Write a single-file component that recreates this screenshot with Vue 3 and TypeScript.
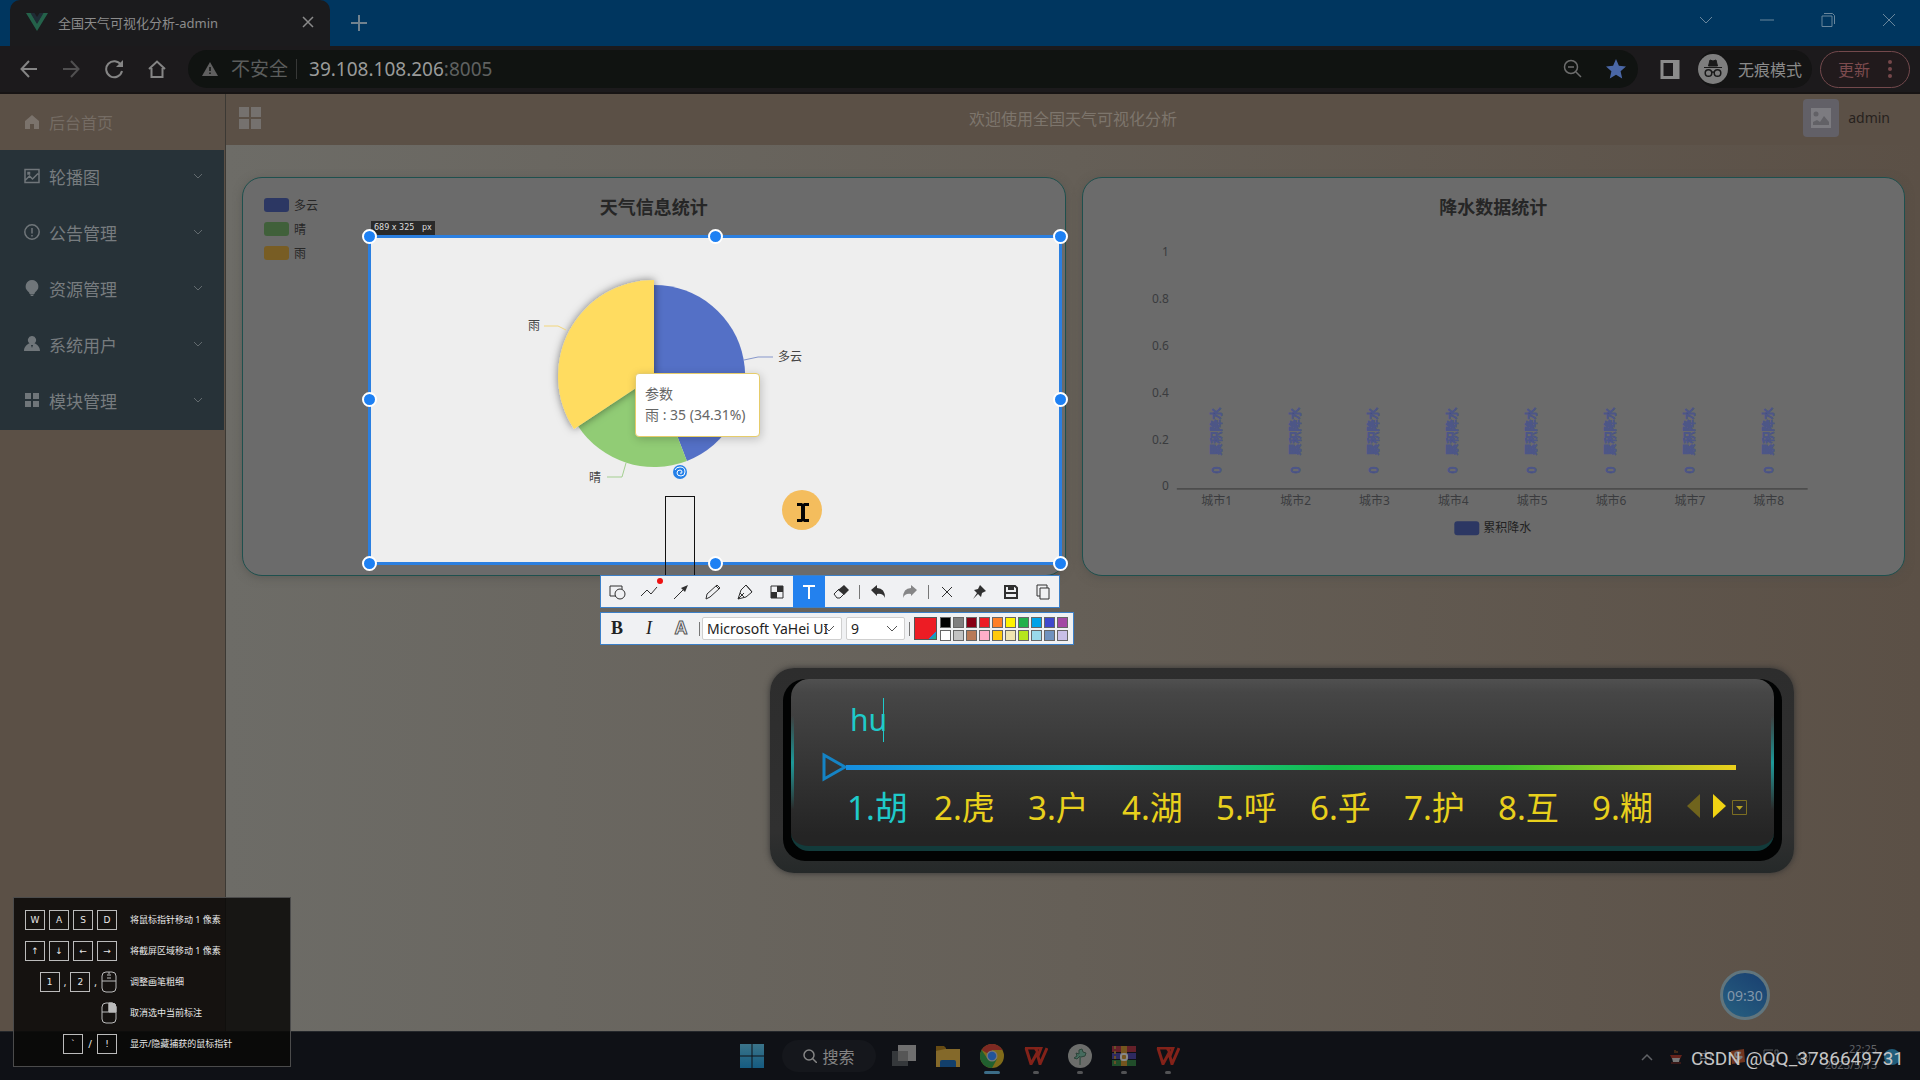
<script setup lang="ts">
interface MenuItem { label: string; icon: string }

const menu: MenuItem[] = [
  { label: '轮播图', icon: 'M1 1.5h14v13H1zM1.5 12l4-4 3 3 5.500-5.500M4 4.500h1.500v1.500H4z' },
  { label: '公告管理', icon: 'M8 .8a7.200 7.200 0 1 0 0 14.400A7.200 7.200 0 1 0 8 .8zM8 4v5.500M8 11v1.500' },
  { label: '资源管理', icon: 'bulb' },
  { label: '系统用户', icon: 'user' },
  { label: '模块管理', icon: 'grid' },
]

const solidIcons: Record<string, string> = {
  bulb: 'M8 0a6.500 6.500 0 0 0-4 11.500c1 .8 1.500 1.500 1.500 2.500h5c0-1 .5-1.700 1.500-2.500A6.500 6.500 0 0 0 8 0zM6 14.500h4L9 16H7z',
  user: 'M8 0a4 4 0 0 1 2.500 7.200C13.500 8.500 16 11 16 15H0c0-4 2.500-6.500 5.500-7.800A4 4 0 0 1 8 0zM7 9l1 3 1-3z',
  grid: 'M1 1h6v6H1zM9 1h6v6H9zM1 9h6v6H1zM9 9h6v6H9z',
}

const weather = [
  { name: '多云', color: '#2c3763' },
  { name: '晴', color: '#40603a' },
  { name: '雨', color: '#785d24' },
]

const ticks = ['1', '0.8', '0.6', '0.4', '0.2', '0']
const cities = [1, 2, 3, 4, 5, 6, 7, 8].map((n) => `城市${n}`)
const categoryX = (i: number): number => 134 + i * 79

const candidates = ['胡', '虎', '户', '湖', '呼', '乎', '护', '互', '糊']

const palette = [
  '#000000', '#7f7f7f', '#880015', '#ed1c24', '#ff7f27', '#fff200', '#22b14c', '#00a2e8', '#3f48cc', '#a349a4',
  '#ffffff', '#c3c3c3', '#b97a57', '#ffaec9', '#ffc90e', '#efe4b0', '#b5e61d', '#99d9ea', '#7092be', '#c8bfe7',
]

const handles = ['nw', 'n', 'ne', 'w', 'e', 'sw', 's', 'se']
</script>

<template>
  <div class="desktop">
    <header class="tabs">
      <div class="tab">
        <svg width="22" height="18" viewBox="0 0 22 18"><path d="M0 0h5l6 10 6-10h5L11 18z" fill="#24624a" /><path d="M4.500 0h4L11 4l2.500-4h4L11 11z" fill="#1f2c35" /></svg>
        <span class="tab-title">全国天气可视化分析-admin</span>
        <button class="plain" aria-label="关闭标签页"><svg width="12" height="12" viewBox="0 0 12 12"><path d="M1 1l10 10M11 1L1 11" stroke="#8a8a8a" stroke-width="1.500" /></svg></button>
      </div>
      <button class="plain plus" aria-label="新建标签页"><svg width="16" height="16" viewBox="0 0 16 16"><path d="M8 0v16M0 8h16" stroke="#71828e" stroke-width="2" /></svg></button>
      <div class="window-buttons">
        <button class="plain" aria-label="搜索标签页"><svg width="14" height="14" viewBox="0 0 14 14"><path d="M1 4l6 6 6-6" /></svg></button>
        <button class="plain" aria-label="最小化"><svg width="14" height="14" viewBox="0 0 14 14"><path d="M0 7h14" /></svg></button>
        <button class="plain" aria-label="还原"><svg width="14" height="14" viewBox="0 0 14 14"><path d="M1 3h10v10.500H1zM3 .5h8.500l2 2V11" /></svg></button>
        <button class="plain" aria-label="关闭"><svg width="14" height="14" viewBox="0 0 14 14"><path d="M1 1l12 12M13 1L1 13" /></svg></button>
      </div>
    </header>

    <nav class="toolbar">
      <button class="plain" aria-label="后退"><svg width="18" height="18" viewBox="0 0 18 18" class="line"><path d="M17 9H2M9 1L1.500 9 9 17" /></svg></button>
      <button class="plain faint" aria-label="前进"><svg width="18" height="18" viewBox="0 0 18 18" class="line"><path d="M1 9h15M9 1l7.500 8L9 17" /></svg></button>
      <button class="plain" aria-label="刷新"><svg width="20" height="20" viewBox="0 0 20 20" class="line"><path d="M17 6A8 8 0 1 0 18 12" /><path d="M19 1v7h-7z" fill="#858585" stroke="none" /></svg></button>
      <button class="plain" aria-label="主页"><svg width="18" height="18" viewBox="0 0 18 18" class="line"><path d="M1 9l8-7.500L17 9M3.500 8v9h11V8" /></svg></button>
      <div class="omnibox">
        <svg width="16" height="14" viewBox="0 0 16 14"><path d="M8 0l8 14H0z" fill="#606060" /><path d="M8 5v4M8 10.500v1.500" stroke="#101311" stroke-width="1.500" /></svg>
        <span class="unsafe">不安全</span>
        <span class="address"><b>39.108.108.206</b>:8005</span>
        <svg class="push" width="20" height="20" viewBox="0 0 20 20" fill="none" stroke="#6d6d6d" stroke-width="1.500"><circle cx="8" cy="8" r="6.500" /><path d="M5 8h6M13 13l5 5" /></svg>
        <svg width="20" height="20" viewBox="0 0 20 20"><path d="M10 0l2.900 6.800 7.100.7-5.400 4.800 1.600 7.200-6.200-3.700-6.200 3.700 1.600-7.200L0 7.500l7.100-.7z" fill="#4a67a6" /></svg>
      </div>
      <svg width="20" height="19" viewBox="0 0 20 19"><path d="M2 1.500h16v16H2z" fill="none" stroke="#8b8b8b" stroke-width="3" /><path d="M13 2h5v15h-5z" fill="#8b8b8b" /></svg>
      <div class="private">
        <svg width="30" height="30" viewBox="0 0 30 30"><circle cx="15" cy="15" r="15" fill="#7e7e7e" /><path d="M10.500 12L12 6l3 1 3-1 1.500 6zM6 13.500h18" fill="#191919" stroke="#191919" /><g fill="none" stroke="#191919" stroke-width="1.500"><circle cx="10.500" cy="19" r="3.300" /><circle cx="19.500" cy="19" r="3.300" /><path d="M14 18.500q1-1 2 0" /></g></svg>
        <span>无痕模式</span>
      </div>
      <button class="update">更新<svg width="4" height="18" viewBox="0 0 4 18" fill="#75474a"><circle cx="2" cy="2" r="2" /><circle cx="2" cy="9" r="2" /><circle cx="2" cy="16" r="2" /></svg></button>
    </nav>

    <div class="app">
      <aside class="side">
        <a href="#" class="home"><svg width="14" height="14" viewBox="0 0 14 14"><path d="M7 0l7 6v8H9V9H5v5H0V6z" fill="#7b736c" /></svg>后台首页</a>
        <ul class="menu">
          <li v-for="item in menu" :key="item.label">
            <a href="#">
              <svg width="16" height="16" viewBox="0 0 16 16">
                <path v-if="solidIcons[item.icon]" :d="solidIcons[item.icon]" fill="#70767a" fill-rule="evenodd" />
                <path v-else :d="item.icon" fill="none" stroke="#70767a" stroke-width="1.500" />
              </svg>
              <span>{{ item.label }}</span>
              <svg class="push" width="10" height="6" viewBox="0 0 10 6"><path d="M1 1l4 4 4-4" fill="none" stroke="#626a6e" /></svg>
            </a>
          </li>
        </ul>
      </aside>

      <section class="main">
        <header class="head">
          <svg width="22" height="22" viewBox="0 0 22 22"><path d="M0 0h10v10H0zM12 0h10v10H12zM0 12h10v10H0zM12 12h10v10H12z" fill="#75716e" /></svg>
          <h1>欢迎使用全国天气可视化分析</h1>
          <div class="account">
            <span class="avatar"><svg width="20" height="20" viewBox="0 0 20 20"><path d="M0 0h20v20H0z" fill="#7c7b80" /><circle cx="5" cy="6" r="2.500" fill="#626166" /><path d="M2 17v-3l4-2 3 2 4-6 5 6v3z" fill="#626166" /></svg></span>
            <span>admin</span>
          </div>
        </header>
        <div class="cards">
          <article class="card">
            <ul class="legend">
              <li v-for="w in weather" :key="w.name"><i :style="{ background: w.color }"></i>{{ w.name }}</li>
            </ul>
            <h2>天气信息统计</h2>
          </article>
          <article class="card">
            <h2>降水数据统计</h2>
            <svg class="bars" viewBox="0 0 823 398">
              <text v-for="(t, i) in ticks" :key="t" class="tick" x="86" :y="78 + i * 47">{{ t }}</text>
              <path d="M94 311.500H726" stroke="#383838" />
              <g v-for="(c, i) in cities" :key="c">
                <text class="city" :x="categoryX(i)" y="328">{{ c }}</text>
                <text class="value" :transform="`translate(${categoryX(i) + 4} 296) rotate(-90)`">0</text>
                <text class="value" :transform="`translate(${categoryX(i) + 4} 278) rotate(-90)`">累积降水</text>
              </g>
              <rect x="372" y="344" width="25" height="14" rx="3" fill="#2c3763" />
              <text class="series" x="401" y="355">累积降水</text>
            </svg>
          </article>
        </div>
      </section>
    </div>

    <footer class="taskbar">
      <div class="dock">
        <svg width="24" height="24" viewBox="0 0 24 24"><defs><linearGradient id="win" x2="0" y2="1"><stop stop-color="#3b7489" /><stop offset="1" stop-color="#155b80" /></linearGradient></defs><path d="M0 0h11.500v11.500H0zM12.500 0H24v11.500H12.500zM0 12.500h11.500V24H0zM12.500 12.500H24V24H12.500z" fill="url(#win)" /></svg>
        <button class="find"><svg width="14" height="14" viewBox="0 0 14 14"><circle cx="6" cy="6" r="5" fill="none" stroke="#858585" stroke-width="1.500" /><path d="M9.500 9.500L14 14" stroke="#858585" stroke-width="1.500" /></svg>搜索</button>
        <svg width="24" height="24" viewBox="0 0 24 24"><path d="M0 7h16v15H0z" fill="#35383b" /><path d="M6 1h18v16H6z" fill="#6f6f6f" /><path d="M6 7h10v10H6z" fill="#565656" /></svg>
        <svg width="24" height="24" viewBox="0 0 24 24"><path d="M0 2h8l2 2v4H0z" fill="#674b13" /><path d="M0 7l9-2h15v18H0z" fill="#84692a" /><path d="M4 23v-5q0-2 2-2h12q2 0 2 2v5z" fill="#123f6b" /></svg>
        <span class="running active"><svg width="24" height="24" viewBox="0 0 24 24"><circle cx="12" cy="12" r="12" fill="#806b19" /><path d="M12 12L1.600 6A12 12 0 0 1 22.400 6H12z" fill="#7e2922" /><path d="M1.600 6A12 12 0 0 0 12 24l5-9-5 1-5-2z" fill="#21602f" /><circle cx="12" cy="12" r="5.500" fill="#777" /><circle cx="12" cy="12" r="4.200" fill="#22549a" /></svg></span>
        <span class="running"><svg width="24" height="18" viewBox="0 0 24 18"><path d="M1 1h10l2 3M2 1l5 16 6-11 3 11 7-16M12 1h5l-3 8" fill="none" stroke="#832219" stroke-width="3" /></svg></span>
        <span class="running"><svg width="24" height="24" viewBox="0 0 24 24"><circle cx="12" cy="12" r="12" fill="#6c6d6b" /><path d="M12 21v-9l-3 3-3-1 3-2-1-3 3 1 0-4 3-1 1 3 3 1-1 3-4 1" fill="#456b5e" stroke="#2c4439" /></svg></span>
        <span class="running"><svg width="24" height="20" viewBox="0 0 24 20"><path d="M0 0h24v6H0z" fill="#652029" /><path d="M0 7h24v6H0z" fill="#2e2a60" /><path d="M0 14h24v6H0z" fill="#214d2a" /><path d="M9 0h6v20H9z" fill="#75551e" /><path d="M3 0v20" stroke="#685028" stroke-width="2" stroke-dasharray="3 2" /><rect x="9" y="8" width="6" height="6" rx="2" fill="none" stroke="#888" stroke-width="2" /></svg></span>
        <span class="running"><svg width="24" height="18" viewBox="0 0 24 18"><path d="M1 1h10l2 3M2 1l5 16 6-11 3 11 7-16M12 1h5l-3 8" fill="none" stroke="#832219" stroke-width="3" /></svg></span>
      </div>
      <div class="tray">
        <svg width="12" height="8" viewBox="0 0 12 8"><path d="M1 7l5-5 5 5" fill="none" stroke="#606266" stroke-width="1.500" /></svg>
        <svg width="12" height="14" viewBox="0 0 12 14"><path d="M5 0v3M7 1v2" stroke="#75451b" /><path d="M0 5h12l-2 4H2z" fill="#65231b" /><path d="M2 8h8l-1 4H3z" fill="#777" /><path d="M1 13h10" stroke="#65231b" /></svg>
        <span class="ime-mode">中</span>
        <svg width="16" height="16" viewBox="0 0 16 16"><path d="M1 2l13-2 1 13-13 2z" fill="#71351f" /><path d="M11 4Q5 2 5 5.500t5 2.500-5 4" fill="none" stroke="#777" stroke-width="2" /></svg>
        <svg width="16" height="16" viewBox="0 0 16 16" fill="none" stroke="#55585b"><path d="M10 1H1v11h13V7M12 1h3v4h-3zM5 15h6" /></svg>
        <svg width="16" height="16" viewBox="0 0 16 16" fill="none" stroke="#55585b"><path d="M1 6h3l4-4v12l-4-4H1zM10 5q2 3 0 6M12 3q4 5 0 10" /></svg>
        <time>22:25<br>2023/5/13</time>
        <svg width="16" height="16" viewBox="0 0 16 16"><circle cx="8" cy="8" r="8" fill="#205d7b" /></svg>
      </div>
    </footer>

    <div class="capture">
      <span class="size">689 x 325 &nbsp; px</span>
      <svg class="pie" width="300" height="210" viewBox="0 0 300 210">
        <defs><filter id="soft" x="-20%" y="-20%" width="140%" height="140%"><feDropShadow dx="0" dy="0" stdDeviation="4" flood-opacity=".5" /></filter></defs>
        <path d="M144 106V15A91 91 0 0 1 176.900 190.900z" fill="#5470c6" />
        <path d="M144 106L176.900 190.900A91 91 0 0 1 68.100 156.200z" fill="#91cc75" />
        <path d="M144 106L64 159A96 96 0 0 1 144 10z" fill="#ffdc60" filter="url(#soft)" />
        <g fill="none"><path d="M234 90l14-3h15" stroke="#8797cb" /><path d="M116 193l-4 14H97" stroke="#a4cf91" /><path d="M56 60l-8-4H34" stroke="#f2d67c" /></g>
        <g class="pie-label"><text x="268" y="91">多云</text><text x="18" y="60">雨</text><text x="79" y="212">晴</text></g>
      </svg>
      <div class="tip">参数<br>雨 : 35 (34.31%)</div>
      <svg class="spiral" width="16" height="16" viewBox="0 0 16 16"><circle cx="8" cy="8" r="7" fill="#2480e8" /><path d="M3 6q1-3 5-3 5 0 5 5 0 4-4 4-4 0-4-3t3-3q2 0 2 2t-2 1" fill="none" stroke="#fff" /></svg>
      <div class="draft"></div>
      <svg class="pointer" width="40" height="40" viewBox="0 0 40 40"><circle cx="20" cy="20" r="20" fill="#f4bd5d" /><path d="M15 13h5l1 1 1-1h5v3h-4v13h4v3h-5l-1-1-1 1h-5v-3h4V16h-4z" fill="#050505" /></svg>
      <i v-for="h in handles" :key="h" class="handle" :class="h"></i>
    </div>

    <div class="tools">
      <div class="tool-row first">
        <button aria-label="形状"><svg viewBox="0 0 18 18"><path d="M8 13H2V3h12v3" /><circle cx="12" cy="11" r="5" /></svg></button>
        <button aria-label="折线"><svg viewBox="0 0 18 18"><path d="M1 13l6-6 4 4 6-7" /></svg><i class="alert"></i></button>
        <button aria-label="箭头"><svg viewBox="0 0 18 18"><path d="M2 16L12 6" /><path d="M16 2l-3 7-4-4z" class="fill" /></svg></button>
        <button aria-label="画笔"><svg viewBox="0 0 18 18"><path d="M2 16l1-5 10-9 3 3-10 9zM12 3l3 3" /></svg></button>
        <button aria-label="记号笔"><svg viewBox="0 0 18 18"><path d="M2 16l3-9 5-5 6 7-6 5zM4 10l4 4M10 2l6 7M2 16l6-6" /></svg></button>
        <button aria-label="马赛克"><svg viewBox="0 0 18 18"><path d="M3 3h12v12H3z" /><path d="M9 3h6v6H9zM3 9h6v6H3z" class="fill" /></svg></button>
        <button class="on" aria-label="文字"><svg viewBox="0 0 18 18"><path d="M3 3h12M9 3v13" /></svg></button>
        <button aria-label="橡皮"><svg viewBox="0 0 18 18"><path d="M2 11l5-5 5 5-4 4H5z" /><path d="M6 7l6-5 5 5-5 5z" class="fill" /></svg></button>
        <span class="rule"></span>
        <button aria-label="撤销"><svg viewBox="0 0 18 18"><path d="M2 7l6-5v3q8 0 8 10-2-5-8-4v2z" class="fill" /></svg></button>
        <button class="off" aria-label="重做"><svg viewBox="0 0 18 18"><path d="M16 7l-6-5v3q-8 0-8 10 2-5 8-4v2z" class="fill" /></svg></button>
        <span class="rule"></span>
        <button aria-label="取消"><svg viewBox="0 0 18 18"><path d="M4 4l10 10M14 4L4 14" /></svg></button>
        <button aria-label="贴图"><svg viewBox="0 0 18 18"><path d="M10 2l6 6-2 1-2 1-1 4-3-3-5 5 4-6-3-3 4-1z" class="fill" /></svg></button>
        <button aria-label="保存"><svg viewBox="0 0 18 18"><path d="M3 3h10l2 2v10H3z" stroke-width="2" /><path d="M6 3h6v4H6zM3 9h12v2H3z" class="fill" /></svg></button>
        <button aria-label="复制"><svg viewBox="0 0 18 18"><path d="M6 5h9v11H6zM6 13H3V2h10v3" /></svg></button>
      </div>
      <div class="tool-row second">
        <button class="bold">B</button><button class="italic">I</button><button class="outline">A</button>
        <span class="rule"></span>
        <select class="family" aria-label="字体"><option>Microsoft YaHei UI</option></select>
        <select class="points" aria-label="字号"><option>9</option></select>
        <span class="rule"></span>
        <span class="current"></span>
        <span class="palette"><i v-for="c in palette" :key="c" :style="{ background: c }"></i></span>
      </div>
    </div>

    <div class="ime">
      <div class="ime-well">
        <div class="ime-panel">
          <div class="typed">hu</div>
          <div class="track"><svg width="26" height="30" viewBox="0 0 26 30"><path d="M2 3v24l21-12z" fill="none" stroke="#1583c4" stroke-width="3" /></svg><i></i></div>
          <div class="choices">
            <ol><li v-for="(c, i) in candidates" :key="c">{{ i + 1 }}.{{ c }}</li></ol>
            <svg width="62" height="26" viewBox="0 0 62 26"><path d="M14 1v24L1 13z" fill="#70641d" /><path d="M27 1v24l13-12z" fill="#f0d313" /><path d="M46.500 7.500h14v14h-14z" fill="none" stroke="#7c6e22" /><path d="M50 13h7l-3.500 4z" fill="#b7a323" /></svg>
          </div>
        </div>
      </div>
    </div>

    <div class="hints">
      <div class="hint"><span class="keys"><kbd>W</kbd><kbd>A</kbd><kbd>S</kbd><kbd>D</kbd></span>将鼠标指针移动 1 像素</div>
      <div class="hint"><span class="keys"><kbd>↑</kbd><kbd>↓</kbd><kbd>←</kbd><kbd>→</kbd></span>将截屏区域移动 1 像素</div>
      <div class="hint"><span class="keys"><kbd>1</kbd>,<kbd>2</kbd>,<svg width="16" height="22" viewBox="0 0 16 22"><rect x="1" y="1" width="14" height="20" rx="4" /><path d="M1 10h14M8 1v2M6 4h4M6 7h4" /></svg></span>调整画笔粗细</div>
      <div class="hint"><span class="keys"><svg width="16" height="22" viewBox="0 0 16 22"><path d="M8 1h3q4 0 4 4v5H8z" class="lit" /><rect x="1" y="1" width="14" height="20" rx="4" /><path d="M1 10h14M8 1v9" /></svg></span>取消选中当前标注</div>
      <div class="hint"><span class="keys wide"><kbd>`</kbd>/<kbd>!</kbd></span>显示/隐藏捕获的鼠标指针</div>
    </div>

    <div class="timer">09:30</div>
    <div class="credit">CSDN @QQ_3786649731</div>
  </div>
</template>

<style>
body { margin: 0; background: #0f1116; }
</style>

<style scoped>
* { box-sizing: border-box; }
.desktop { position: relative; min-height: 100vh; display: flex; flex-direction: column; overflow: hidden; font-family: "Noto Sans", "Noto Sans CJK SC", sans-serif; font-size: 16px; }
button { font: inherit; color: inherit; border: 0; background: none; padding: 0; }
a { color: inherit; text-decoration: none; }
ul, ol { list-style: none; margin: 0; padding: 0; }
svg { flex: none; display: block; }
.plain { display: flex; align-items: center; justify-content: center; }
.push { margin-left: auto; }

.tabs { height: 46px; flex: none; display: flex; align-items: center; background: #00365f; padding-left: 10px; }
.tab { width: 320px; height: 46px; display: flex; align-items: center; gap: 10px; padding: 0 16px 2px; background: #1b1b1d; border-radius: 10px 10px 0 0; color: #8c8c8c; font-size: 13px; }
.tab .plain { margin-left: auto; }
.plus { margin-left: 21px; }
.window-buttons { margin-left: auto; display: flex; gap: 47px; padding: 0 24px 6px 0; }
.window-buttons path { fill: none; stroke: #69869c; }

.toolbar { height: 48px; flex: none; display: flex; align-items: center; background: #1c1a1c; padding: 0 10px 0 20px; border-bottom: 2px solid #171414; }
.toolbar > .plain { margin-right: 24px; }
.toolbar > .plain:nth-child(4) { margin-right: 22px; }
.line { fill: none; stroke: #858585; stroke-width: 2; }
.faint { opacity: .5; }
.omnibox { flex: 1; height: 38px; border-radius: 19px; background: #101311; display: flex; align-items: center; padding: 0 12px 0 14px; margin-right: 22px; }
.unsafe { font-size: 19px; color: #5b5d5c; margin-left: 13px; padding-right: 8px; border-right: 1px solid #373837; line-height: 20px; }
.address { color: #5f6160; font-size: 19px; margin-left: 12px; }
.address b { font-weight: 400; color: #9a9b9a; }
.omnibox .push { margin-right: 23px; margin-left: auto; }
.private { display: flex; align-items: center; gap: 10px; height: 38px; margin-left: 18px; background: #141414; border-radius: 19px; color: #8a8a8a; padding-right: 10px; }
.update { height: 37px; width: 90px; margin-left: 8px; display: flex; align-items: center; justify-content: space-between; padding: 0 17px; border: 1px solid #73494c; border-radius: 19px; color: #7c4b4e; background: #211a1c; }

.app { flex: 1; display: flex; }
.side { width: 226px; flex: none; background: #5b5046; border-right: 1px solid #3c3934; color: #777c7f; font-size: 17px; }
.home { height: 56px; display: flex; align-items: center; gap: 10px; padding-left: 25px; color: #756c64; font-size: 16px; }
.menu { background: #273238; margin-right: 1px; }
.menu a { height: 56px; display: flex; align-items: center; gap: 9px; padding: 0 21px 4px 24px; }
.main { flex: 1; min-width: 0; background: linear-gradient(to right, #6d6c67 0%, #655f57 50%, #5b5046 100%); }
.head { height: 51px; display: grid; grid-template-columns: 1fr auto 1fr; align-items: center; padding: 0 13px 4px; background: #5b5046; }
.head h1 { margin: 0; font-size: 16px; font-weight: 400; color: #7d756c; }
.account { justify-self: end; display: flex; align-items: center; gap: 9px; margin-right: 17px; color: #27221e; font-size: 14px; }
.avatar { width: 36px; height: 38px; border-radius: 4px; background: #626067; display: grid; place-items: center; }
.cards { display: flex; gap: 16px; padding: 32px 15px 0 16px; }
.card { position: relative; flex: 1; border: 1px solid #1e504e; border-radius: 20px; background: #6b6b6b; box-shadow: 0 2px 8px #4e4d4988; }
.card h2 { position: absolute; top: 16px; left: 0; right: 0; margin: 0; text-align: center; font-size: 18px; line-height: 26px; color: #262626; }
.legend { padding: 15px 0 0 21px; font-size: 12px; color: #272727; }
.legend li { display: flex; align-items: center; gap: 5px; height: 24px; }
.legend i { width: 25px; height: 14px; border-radius: 3px; }
.bars { width: 100%; font-size: 12px; fill: #3a3b3e; }
.tick { text-anchor: end; }
.city { text-anchor: middle; }
.value { fill: #363f68; stroke: #4d5687; stroke-width: 1; }
.series { fill: #222; }

.taskbar { height: 49px; flex: none; position: relative; display: flex; align-items: center; background: #0f1116; border-top: 1px solid #24272b; }
.dock { margin: 0 auto; display: flex; align-items: center; gap: 20px; }
.find { display: flex; align-items: center; justify-content: center; gap: 5px; width: 94px; height: 32px; margin: 0 -4px 0 -2px; border-radius: 16px; background: #15171c; color: #858585; }
.running { position: relative; height: 24px; display: grid; place-items: center; }
.running::after { content: ""; position: absolute; bottom: -6px; left: 9px; width: 6px; height: 3px; border-radius: 2px; background: #525355; }
.running.active::after { left: 4px; width: 16px; background: #3c6d88; }
.tray { position: absolute; right: 20px; top: 8px; display: flex; align-items: center; gap: 17px; height: 34px; color: #626468; font-size: 11px; line-height: 16px; }
.ime-mode { font-size: 14px; }
.tray time { text-align: right; margin: 0 -10px 0 -4px; }

.capture { position: absolute; left: 368px; top: 235px; width: 694px; height: 330px; border: 3px solid #2b7fe0; background: #eee; }
.size { position: absolute; left: 0; top: -17px; background: #2a2a2a; color: #ddd; font: 8px/14px "DejaVu Sans", sans-serif; padding: 0 3px; white-space: nowrap; }
.pie { position: absolute; left: 139px; top: 32px; overflow: visible; }
.pie-label { font-size: 12px; fill: #444; }
.tip { position: absolute; left: 264px; top: 135px; width: 125px; height: 64px; padding: 9px; border: 1px solid #e6cc6a; border-radius: 4px; background: #fff; color: #666; font-size: 14px; line-height: 21px; box-shadow: 1px 2px 10px #0003; white-space: nowrap; }
.spiral { position: absolute; left: 301px; top: 226px; }
.draft { position: absolute; left: 294px; top: 258px; width: 30px; height: 81px; border: 1px solid #111; border-bottom: 0; }
.pointer { position: absolute; left: 411px; top: 252px; }
.handle { position: absolute; width: 15px; height: 15px; border-radius: 50%; background: #1d80f3; border: 2px solid #fff; left: -9px; top: -9px; }
.n, .s { left: 337px; }
.ne, .e, .se { left: 682px; }
.w, .e { top: 154px; }
.sw, .s, .se { top: 318px; }

.tools { position: absolute; left: 600px; top: 575px; display: flex; flex-direction: column; align-items: flex-start; gap: 4px; }
.tool-row { display: flex; align-items: center; height: 33px; background: #f0f1f3; border: 1px solid #3c80c8; color: #222; }
.tool-row button { position: relative; width: 32px; height: 31px; display: grid; place-items: center; }
.tool-row button svg { width: 18px; height: 18px; fill: none; stroke: #303030; stroke-width: 1; }
.tool-row .fill { fill: #303030; stroke: none; }
.tool-row .on { background: #2381ee; }
.tool-row .on svg { stroke: #fff; stroke-width: 2; }
.tool-row .off { opacity: .55; }
.rule { width: 1px; height: 14px; margin: 0 2px; background: #777; }
.alert { position: absolute; right: 2px; top: 2px; width: 6px; height: 6px; border-radius: 50%; background: #ee1111; }
.tool-row .bold { font: bold 18px "Liberation Serif", serif; }
.tool-row .italic { font: italic 18px "Liberation Serif", serif; }
.tool-row .outline { font: bold 18px "Liberation Sans", sans-serif; color: #f0f1f3; -webkit-text-stroke: 1px #555; }
.tool-row select { appearance: none; height: 23px; border: 1px solid #cfcfcf; border-radius: 2px; padding: 0 4px; color: #222; font: 14px "Noto Sans", sans-serif; background: #fff url("data:image/svg+xml,%3Csvg xmlns='http://www.w3.org/2000/svg' width='12' height='8'%3E%3Cpath d='M1 1l5 5 5-5' fill='none' stroke='%23555'/%3E%3C/svg%3E") no-repeat right 6px center; }
.family { width: 140px; }
.tool-row .points { width: 59px; margin: 0 2px 0 4px; }
.current { width: 23px; height: 23px; margin: 0 3px 0 2px; border: 1px solid #555; background: linear-gradient(135deg, #ed1c24 82%, #168bea 82%, #25b95a); }
.palette { display: grid; grid-template-columns: repeat(10, 11px); gap: 2px; padding-right: 5px; }
.palette i { height: 11px; border: 1px solid #666; }

.ime { position: absolute; left: 770px; top: 668px; width: 1024px; height: 205px; padding: 11px 12px 12px 13px; border-radius: 24px; background: linear-gradient(#2d2d2d, #303030 80%, #252929); box-shadow: 0 0 6px #333; }
.ime-well { height: 182px; padding: 0 8px 9px; border-radius: 22px; background: #020303; }
.ime-panel { height: 172px; padding: 19px 30px 0 31px; border-radius: 18px; border-bottom: 5px solid #123b3b; background: linear-gradient(transparent 22%, #1d9999 50%, transparent 78%) left / 3px 100% no-repeat, linear-gradient(transparent 22%, #1d9999 50%, transparent 78%) right / 3px 100% no-repeat, linear-gradient(#505050, #464646 8%, #242424 94%); }
.typed { width: 34px; margin-left: 28px; color: #1fcaca; font-size: 30px; line-height: 44px; height: 44px; border-right: 1px solid #1fcaca; }
.track { display: flex; align-items: center; height: 30px; margin: 10px 8px 0 0; }
.track i { flex: 1; height: 5px; margin-left: -2px; background: linear-gradient(to right, #168ee0, #17c8cc 28%, #15bd46 55%, #3cc42c 74%, #ecd01c); }
.choices { display: flex; align-items: center; height: 48px; color: #e8d01c; font-size: 33px; }
.choices ol { display: flex; flex: 1; padding-left: 25px; }
.choices li { width: 94px; white-space: nowrap; }
.choices li:first-child { width: 87px; color: #1fcaca; }

.hints { position: absolute; left: 13px; top: 897px; width: 278px; padding: 6px 12px 7px 9px; display: flex; flex-direction: column; border: 1px solid #4b4b4b; background: rgb(10 9 8 / 87%); color: #e8e8e8; font-size: 9px; }
.hint { height: 31px; display: flex; align-items: center; gap: 13px; }
.keys { width: 94px; display: flex; align-items: center; justify-content: flex-end; gap: 4px; font-size: 10px; }
.keys.wide { gap: 5px; }
kbd { width: 20px; height: 20px; border: 1px solid #bbb; display: grid; place-items: center; font: 9px "DejaVu Sans", sans-serif; }
.keys svg { fill: none; stroke: #bbb; }
.keys .lit { fill: #bbb; }
.timer { position: absolute; left: 1720px; top: 970px; width: 50px; height: 50px; border: 3px solid #61757d; border-radius: 50%; background: linear-gradient(35deg, #276080, #193f70); display: grid; place-items: center; color: #8297aa; font-size: 14px; }
.credit { position: absolute; right: 16px; bottom: 9px; color: #c5c5c5; font: 19px/24px Roboto, sans-serif; }
</style>
